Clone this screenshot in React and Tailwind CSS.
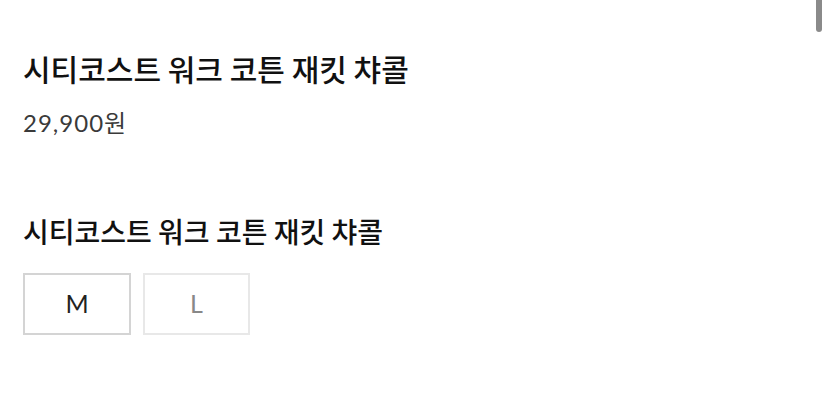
export default function App() {
  return (
    <div className="relative w-[828px] h-[401px] overflow-hidden bg-white" style={{ fontFamily: '"Noto Sans CJK KR", "Noto Sans", sans-serif' }}>
      <div className="absolute right-[6px] top-0 w-[6px] h-[32px] bg-[#8a8a8a] rounded-b-[3px]" />
      <div className="pl-[23px] pt-[48px]">
        <h1 className="text-[30px] leading-[40px] font-medium text-[#111]">시티코스트 워크 코튼 재킷 챠콜</h1>
        <div className="mt-[19px] text-[24px] leading-[32px] text-[#3a3a3a] tracking-[1px]" style={{ fontFamily: 'Lato, "Noto Sans CJK KR", sans-serif' }}>29,900원</div>
        <h2 className="mt-[73px] text-[28px] leading-[38px] font-medium text-[#111]">시티코스트 워크 코튼 재킷 챠콜</h2>
        <div className="mt-[23px] flex gap-[12px]">
          <button className="w-[108px] h-[62px] border-2 border-[#d4d4d4] bg-white flex items-center justify-center text-[25px] text-[#222]" style={{ fontFamily: 'Lato, sans-serif' }}>M</button>
          <button className="w-[107px] h-[62px] border-2 border-[#e8e8e8] bg-white flex items-center justify-center text-[25px] text-[#888]" style={{ fontFamily: 'Lato, sans-serif' }}>L</button>
        </div>
      </div>
    </div>
  );
}
